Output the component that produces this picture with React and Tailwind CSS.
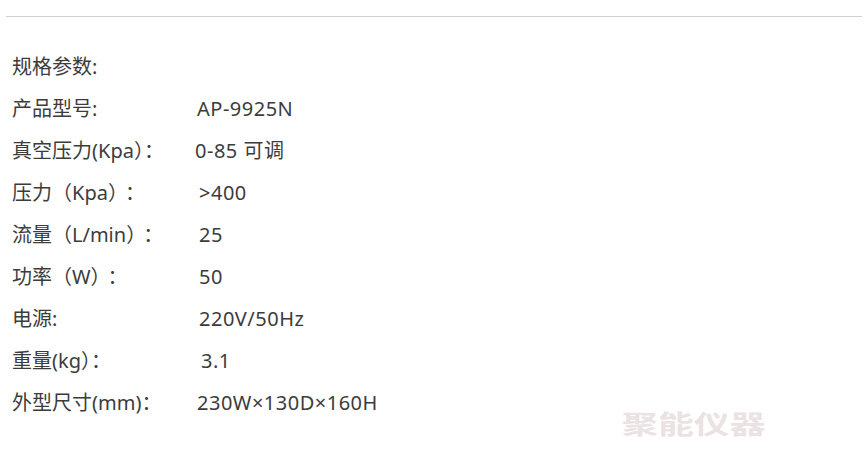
export default function App() {
  const rows = [
    ["产品型号:", "", "AP-9925N", "ml-[197px]"],
    ["真空压力(Kpa）：", "", "0-85 可调", "ml-[195px]"],
    ["压力（Kpa）", "：", ">400", "ml-[199px]"],
    ["流量（L/min）", "：", "25", "ml-[199px]"],
    ["功率（W）", "：", "50", "ml-[199px]"],
    ["电源:", "", "220V/50Hz", "ml-[199px]"],
    ["重量(kg）：", "", "3.1", "ml-[201px]"],
    ["外型尺寸(mm)：", "", "230W×130D×160H", "ml-[197px]"],
  ];
  return (
    <div
      className="relative w-[868px] h-[466px] bg-white text-[20px] text-[#3c3c3c] overflow-hidden"
      style={{ fontFamily: '"Noto Sans", "Noto Sans CJK SC", sans-serif' }}
    >
      <div className="mx-[6px] pt-[16px] border-b border-[#d0d0d0]" />
      <div className="flex flex-col pt-[29px]">
        <div className="h-[42px] flex items-center pl-[12px]">规格参数:</div>
        {rows.map(([l, c, v, m]) => (
          <div key={l} className="h-[42px] flex items-center relative">
            <span className="absolute left-[12px] whitespace-nowrap">
              {l}
              {c && <span className="ml-[7px]">{c}</span>}
            </span>
            <span className={m + " whitespace-nowrap tracking-[0.5px]"}>{v}</span>
          </div>
        ))}
      </div>
      <div className="absolute left-[622px] top-[411px] text-[26px] font-bold text-[#ebe2e3] origin-left scale-x-[1.38] leading-none whitespace-nowrap">
        聚能仪器
      </div>
    </div>
  );
}
